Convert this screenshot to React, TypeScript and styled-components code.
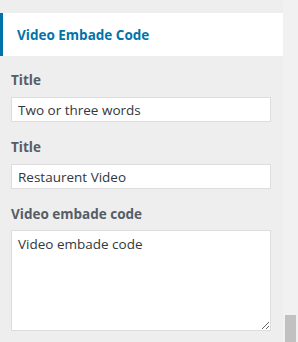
import React from "react";
import styled, { createGlobalStyle } from "styled-components";

const Global = createGlobalStyle`
  html, body { margin: 0; padding: 0; }
  body {
    background: #eeeeee;
    font-family: "Open Sans", "Noto Sans", sans-serif;
    width: 298px;
    height: 342px;
    overflow: hidden;
  }
`;

const Layout = styled.div`
  display: grid;
  grid-template-columns: 283px 15px;
  height: 342px;
`;

const Panel = styled.div`
  padding-top: 13px;
  background: #eeeeee;
`;

const Header = styled.div`
  height: 43px;
  background: #ffffff;
  border-left: 3px solid #0073aa;
  padding-left: 14px;
  display: flex;
  align-items: center;
  font-size: 13.5px;
  font-weight: 700;
  color: #0073aa;
  box-sizing: border-box;
`;

const Fields = styled.div`
  padding: 14px 12px 0 11px;
  display: flex;
  flex-direction: column;
`;

const Field = styled.div`
  display: flex;
  flex-direction: column;
  margin-bottom: 15px;
`;

const Label = styled.label`
  font-size: 13.5px;
  font-weight: 700;
  line-height: 20px;
  color: #555d66;
  margin-bottom: 7px;
`;

const Input = styled.input`
  height: 25px;
  box-sizing: border-box;
  border: 1px solid #dddddd;
  background: #fff;
  padding: 0 6px;
  font-family: "Open Sans", "Noto Sans", sans-serif;
  font-size: 13.5px;
  color: #32373c;
  outline: none;
  width: 100%;
`;

const TextArea = styled.textarea`
  height: 101px;
  box-sizing: border-box;
  border: 1px solid #dddddd;
  background: #fff;
  padding: 3px 6px;
  font-family: "Open Sans", "Noto Sans", sans-serif;
  font-size: 13.5px;
  line-height: 20px;
  color: #32373c;
  outline: none;
  width: 100%;
  resize: vertical;
  margin-top: -1px;
`;

const Track = styled.div`
  background: #f1f1f1;
  display: flex;
  flex-direction: column;
  justify-content: flex-end;
`;

const Thumb = styled.div`
  width: 11px;
  height: 31px;
  margin-left: 2px;
  background: #c1c1c1;
`;

export default function App() {
  return (
    <>
      <Global />
      <Layout>
        <Panel>
          <Header>Video Embade Code</Header>
          <Fields>
            <Field>
              <Label>Title</Label>
              <Input defaultValue="Two or three words" />
            </Field>
            <Field>
              <Label>Title</Label>
              <Input defaultValue="Restaurent Video" />
            </Field>
            <Field>
              <Label>Video embade code</Label>
              <TextArea defaultValue="Video embade code" />
            </Field>
          </Fields>
        </Panel>
        <Track>
          <Thumb />
        </Track>
      </Layout>
    </>
  );
}
